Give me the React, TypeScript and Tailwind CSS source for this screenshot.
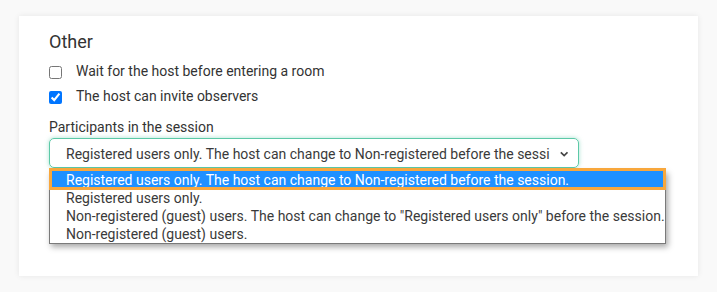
import React from "react";

export default function App() {
  const font = { fontFamily: "Roboto, 'Liberation Sans', sans-serif" };
  return (
    <div
      className="w-[717px] h-[292px] bg-[#f9f9f9] pt-[16px] pl-[19px] overflow-hidden"
      style={font}
    >
      <div className="w-[679px] h-[260px] bg-white shadow-[0_0_6px_rgba(0,0,0,0.08)] pl-[30px] pt-[14px] text-[#333333]">
        <div className="text-[18px] leading-[24px] text-[#333333]">Other</div>
        <div className="mt-[5px] flex flex-col">
          <label className="h-[25px] flex items-center text-[14px]">
            <input type="checkbox" className="m-0 w-[13px] h-[13px] mt-[2px]" />
            <span className="ml-[14px]">Wait for the host before entering a room</span>
          </label>
          <label className="h-[25px] flex items-center text-[14px]">
            <input
              type="checkbox"
              defaultChecked
              className="m-0 w-[13px] h-[13px] mt-[2px]"
            />
            <span className="ml-[14px]">The host can invite observers</span>
          </label>
        </div>
        <div className="mt-[8px] text-[14px] leading-[20px]">Participants in the session</div>
        <div className="mt-[1px] w-[530px] h-[30px] rounded-[5px] border border-[#5cc9a7] shadow-[0_0_4px_rgba(92,201,167,0.55)] flex items-center pl-[16px] pr-[5px] text-[14px] text-[#3a3a3a]">
          <div className="flex-1 whitespace-nowrap pt-[2px]">
            Registered users only. The host can change to Non-registered before the sessi
          </div>
          <svg width="10" height="6" viewBox="0 0 10 6" className="ml-[10px] mr-[5px] mt-[2px]">
            <path d="M1 1 L5 5 L9 1" fill="none" stroke="#444" strokeWidth="2" />
          </svg>
        </div>
        <div className="mt-[2px] w-[617px] border border-[#7a7a7a] bg-white shadow-[2px_3px_6px_rgba(0,0,0,0.35)] text-[14px] leading-[18px] text-[#3a3a3a]">
          <div className="relative h-[18px] bg-[#1e90ff] text-white pl-[16px] whitespace-nowrap">
            Registered users only. The host can change to Non-registered before the session.
            <div className="absolute -top-[3px] -bottom-[1px] -left-[1px] -right-[1px] border-[3px] border-[#f8a73c]" />
          </div>
          <div className="h-[18px] pl-[16px] whitespace-nowrap">Registered users only.</div>
          <div className="h-[18px] pl-[16px] whitespace-nowrap">
            Non-registered (guest) users. The host can change to "Registered users only" before the session.
          </div>
          <div className="h-[18px] pl-[16px] whitespace-nowrap">Non-registered (guest) users.</div>
        </div>
      </div>
    </div>
  );
}
